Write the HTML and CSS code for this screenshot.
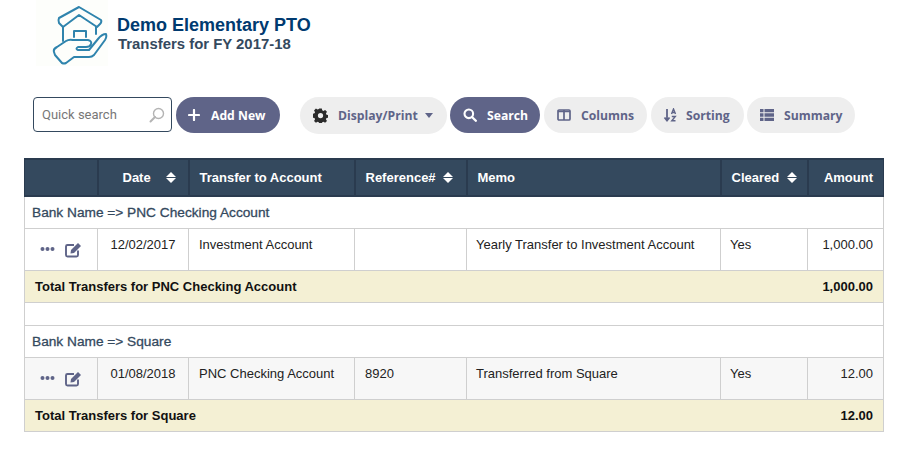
FILE: index.html
```html
<!DOCTYPE html>
<html lang="en">
<head>
<meta charset="utf-8">
<title>Transfers for FY 2017-18</title>
<link rel="stylesheet" href="styles.css">
</head>
<body>
<header class="brand">
  <svg class="logo" viewBox="0 0 72 66" width="72" height="66" aria-hidden="true">
    <rect width="72" height="66" fill="#fdfefb"/>
    <g fill="none" stroke="#2f84ad" stroke-width="2" stroke-linejoin="round" stroke-linecap="round">
      <path d="M23 18 L43 7 L65 20 Q66 22 64 24 L61 27 L43 15 L27 27 L23 23 Q22 20 23 18 Z"/>
      <path d="M27 27 V41 M60 27 V34"/>
      <path d="M38 37 V31 H50 V37"/>
      <path d="M18 52 Q17 49 21 47 L30 41 Q33 39 37 40 L52 40 Q56 41 55 44 Q54 47 50 47 L42 47 Q39 49 42 50 L53 50 L62 39 Q66 34 70 34 Q71 37 69 40 L58 55 Q56 57 53 57 L38 57 L30 63 Q28 64 26 63 L19 55 Z"/>
    </g>
  </svg>
  <div class="brand-text">
    <h1>Demo Elementary PTO</h1>
    <h2>Transfers for FY 2017-18</h2>
  </div>
</header>

<div class="toolbar">
  <label class="quick">
    <input type="text" placeholder="Quick search">
    <svg viewBox="0 0 16 16" width="16" height="16" aria-hidden="true"><circle cx="9.5" cy="6.5" r="5" fill="none" stroke="#b4b4b4" stroke-width="1.4"/><path d="M6 10 L1.5 14.5" stroke="#b4b4b4" stroke-width="2" stroke-linecap="round"/></svg>
  </label>
  <button class="btn dark add">
    <svg viewBox="0 0 12 12" width="12" height="12" aria-hidden="true"><path d="M6 1 V11 M1 6 H11" stroke="#fff" stroke-width="2.2" stroke-linecap="round"/></svg>
    Add New
  </button>
  <button class="btn light display">
    <svg viewBox="0 0 16 16" width="15" height="15" aria-hidden="true"><path fill="#2b2b2b" fill-rule="evenodd" d="M6.6 0.5h2.8l.4 2 1.3.6 1.8-1.1 2 2-1.1 1.8.6 1.3 2 .4v2.8l-2 .4-.6 1.3 1.1 1.8-2 2-1.8-1.1-1.3.6-.4 2H6.6l-.4-2-1.3-.6-1.8 1.1-2-2 1.1-1.8-.6-1.3-2-.4V6.100l2-.4.6-1.3L1.100 2.600l2-2 1.800 1.100 1.300-.6zM8 5.200a2.800 2.800 0 1 0 0 5.600 2.800 2.800 0 0 0 0-5.600z"/></svg>
    <span>Display/Print</span>
    <i class="caret"></i>
  </button>
  <button class="btn dark search">
    <svg viewBox="0 0 14 14" width="14" height="14" aria-hidden="true"><circle cx="5.800" cy="5.800" r="4.300" fill="none" stroke="#fff" stroke-width="2.100"/><path d="M9 9 L12.800 12.800" stroke="#fff" stroke-width="2.300" stroke-linecap="round"/></svg>
    Search
  </button>
  <button class="btn light columns">
    <svg viewBox="0 0 14 12" width="14" height="12" aria-hidden="true"><rect x="1" y="1" width="12" height="10" rx="1" fill="none" stroke="#5f6488" stroke-width="1.700"/><path d="M7 1 V11 M1 2.500 H13" stroke="#5f6488" stroke-width="1.700"/></svg>
    <span>Columns</span>
  </button>
  <button class="btn light sorting">
    <svg viewBox="0 0 14 14" width="14" height="14" aria-hidden="true"><path d="M4 1 V12 M1.500 9.500 L4 12.500 L6.500 9.500" fill="none" stroke="#5f6488" stroke-width="1.800"/><path d="M8.500 6 L10.500 1 L12.500 6 M9.200 4.500 H11.800 M8.800 8.500 H12.300 L8.800 12.800 H12.500" fill="none" stroke="#5f6488" stroke-width="1.400"/></svg>
    <span>Sorting</span>
  </button>
  <button class="btn light summary">
    <svg viewBox="0 0 14 12" width="14" height="12" aria-hidden="true"><path fill="#5f6488" d="M0 0h3.500v3.300H0zM4.500 0H14v3.300H4.500zM0 4.350h3.500v3.300H0zM4.500 4.350H14v3.300H4.500zM0 8.700h3.500V12H0zM4.500 8.700H14V12H4.500z"/></svg>
    <span>Summary</span>
  </button>
</div>

<table class="report">
  <colgroup>
    <col class="c-act"><col class="c-date"><col class="c-acct"><col class="c-ref"><col class="c-memo"><col class="c-clr"><col class="c-amt">
  </colgroup>
  <thead>
    <tr>
      <th></th>
      <th class="date-head">Date <i class="sort date-sort"></i></th>
      <th>Transfer to Account</th>
      <th>Reference# <i class="sort"></i></th>
      <th>Memo</th>
      <th>Cleared <i class="sort"></i></th>
      <th class="right">Amount</th>
    </tr>
  </thead>
  <tbody>
    <tr class="group"><td colspan="7">Bank Name =&gt; PNC Checking Account</td></tr>
    <tr class="data">
      <td class="actions">
        <svg viewBox="0 0 44 18" width="44" height="18" aria-hidden="true"><use href="#row-icons"/></svg>
      </td>
      <td class="center">12/02/2017</td>
      <td>Investment Account</td>
      <td></td>
      <td class="memo">Yearly Transfer to Investment Account</td>
      <td class="cleared">Yes</td>
      <td class="right">1,000.00</td>
    </tr>
    <tr class="total"><td colspan="6">Total Transfers for PNC Checking Account</td><td class="right">1,000.00</td></tr>
    <tr class="spacer"><td colspan="7"></td></tr>
    <tr class="group"><td colspan="7">Bank Name =&gt; Square</td></tr>
    <tr class="data alt">
      <td class="actions">
        <svg viewBox="0 0 44 18" width="44" height="18" aria-hidden="true"><use href="#row-icons"/></svg>
      </td>
      <td class="center">01/08/2018</td>
      <td>PNC Checking Account</td>
      <td>8920</td>
      <td class="memo">Transferred from Square</td>
      <td class="cleared">Yes</td>
      <td class="right">12.00</td>
    </tr>
    <tr class="total"><td colspan="6">Total Transfers for Square</td><td class="right">12.00</td></tr>
  </tbody>
</table>

<svg class="defs" width="0" height="0" aria-hidden="true">
  <defs>
    <g id="row-icons">
      <circle cx="2.500" cy="8" r="2" fill="#5f6488"/><circle cx="7.500" cy="8" r="2" fill="#5f6488"/><circle cx="12.500" cy="8" r="2" fill="#5f6488"/>
      <path d="M38 9.500 V14 Q38 15.500 36.500 15.500 H27.500 Q26 15.500 26 14 V5.500 Q26 4 27.500 4 H34" fill="none" stroke="#5f6488" stroke-width="1.900"/>
      <path d="M31 9 L38 2 L41 5 L34 12 L30.500 12.500 Z" fill="#5f6488"/>
    </g>
  </defs>
</svg>
</body>
</html>
```

FILE: styles.css
```css
* { box-sizing: border-box; }
html, body { margin: 0; padding: 0; background: #fff; }
body {
  width: 899px;
  height: 455px;
  overflow: hidden;
  font-family: "Liberation Sans", Arial, sans-serif;
  font-size: 13px;
  color: #222;
}

.brand {
  display: flex;
  align-items: flex-start;
  height: 97px;
  padding-left: 36px;
}
.logo { flex: none; }
.brand-text { margin-left: 9px; padding-top: 15px; }
.brand h1 {
  margin: 0;
  font-size: 18px;
  line-height: 20px;
  font-weight: 700;
  color: #003a70;
}
.brand h2 {
  margin: 0 0 0 1px;
  font-size: 14.900px;
  line-height: 18px;
  font-weight: 700;
  color: #34495e;
}

.toolbar {
  display: flex;
  align-items: center;
  height: 36px;
  padding-left: 33px;
}
.quick {
  display: flex;
  align-items: center;
  width: 139px;
  height: 35px;
  margin-top: -1px;
  border: 1px solid #34495e;
  border-radius: 4px;
  padding: 0 6px 0 8px;
  background: #fff;
}
.quick input {
  flex: 1;
  min-width: 0;
  border: 0;
  padding: 0;
  outline: 0;
  background: transparent;
  font-family: "Roboto", sans-serif;
  font-size: 13px;
}
.quick input::placeholder { color: #777; opacity: 1; }

.btn {
  display: flex;
  align-items: center;
  height: 36px;
  border: 0;
  border-radius: 18px;
  padding: 0;
  font-family: "Open Sans", sans-serif;
  font-size: 12.200px;
  font-weight: 700;
  white-space: nowrap;
}
.btn.dark { background: #5f6488; color: #fff; }
.btn.light { background: #eeeeee; color: #5f6488; }
.add { width: 104px; margin-left: 4px; padding-left: 12px; gap: 11px; }
.display { width: 147px; height: 37px; border-radius: 19px; margin-left: 20px; padding-left: 13px; gap: 10px; }
.search { width: 90px; margin-left: 3px; padding-left: 13px; gap: 10px; }
.columns { width: 103px; margin-left: 4px; padding-left: 13px; gap: 10px; }
.sorting { width: 93px; margin-left: 4px; padding-left: 12px; gap: 9px; }
.summary { width: 108px; margin-left: 3px; padding-left: 13px; gap: 10px; }
.caret {
  width: 0;
  height: 0;
  margin-left: -3px;
  border-left: 4px solid transparent;
  border-right: 4px solid transparent;
  border-top: 5px solid #5f6488;
}

.report {
  width: 859px;
  margin: 25px 0 0 24px;
  table-layout: fixed;
  border-collapse: collapse;
  font-size: 13px;
}
.c-act { width: 73px; }
.c-date { width: 91px; }
.c-acct { width: 166px; }
.c-ref { width: 112px; }
.c-memo { width: 254px; }
.c-clr { width: 87px; }
.c-amt { width: 76px; }

.report th {
  height: 37px;
  padding: 0 10px;
  background: #34495e;
  border: 2px solid #2a3b4f;
  color: #fff;
  font-size: 13px;
  font-weight: 700;
  text-align: left;
  white-space: nowrap;
}
.report th:first-child { border-left-width: 1px; }
.report th:last-child { border-right-width: 1px; }
.report td {
  border: 1px solid #cfcfcf;
  padding: 0 10px;
  vertical-align: top;
  white-space: nowrap;
}
.report th.date-head { padding-left: 24px; }
.report td.center { text-align: center; }
.report th.right, .report td.right { text-align: right; }

.sort {
  display: inline-block;
  position: relative;
  width: 10px;
  height: 11px;
  margin-left: 4px;
  vertical-align: -1px;
}
.date-sort { margin-left: 12px; }
.sort::before, .sort::after {
  content: "";
  position: absolute;
  left: 0;
  border-left: 5px solid transparent;
  border-right: 5px solid transparent;
}
.sort::before { top: 0; border-bottom: 5px solid #fff; }
.sort::after { bottom: 0; border-top: 5px solid #fff; }

.group td {
  height: 32px;
  padding: 0 0 0 7px;
  vertical-align: middle;
  color: #34495e;
  font-size: 13.700px;
  -webkit-text-stroke: 0.3px #34495e;
}
.data td { height: 42px; padding-top: 8px; }
.data.alt td { background: #f7f7f7; }
.data td.center { padding-left: 0; padding-right: 0; }
.data td.actions { padding: 12px 0 0 15px; }
.actions svg { display: block; }
.report td.memo, .report td.cleared { padding-left: 9px; }
.total td {
  height: 32px;
  background: #f4f0d4;
  padding: 0 10px;
  vertical-align: middle;
  font-weight: 700;
  color: #111;
}
.total td:first-child { border-right: 0; }
.total td:last-child { border-left: 0; }
.spacer td { height: 23px; background: #fff; }
.defs { position: absolute; }
```
